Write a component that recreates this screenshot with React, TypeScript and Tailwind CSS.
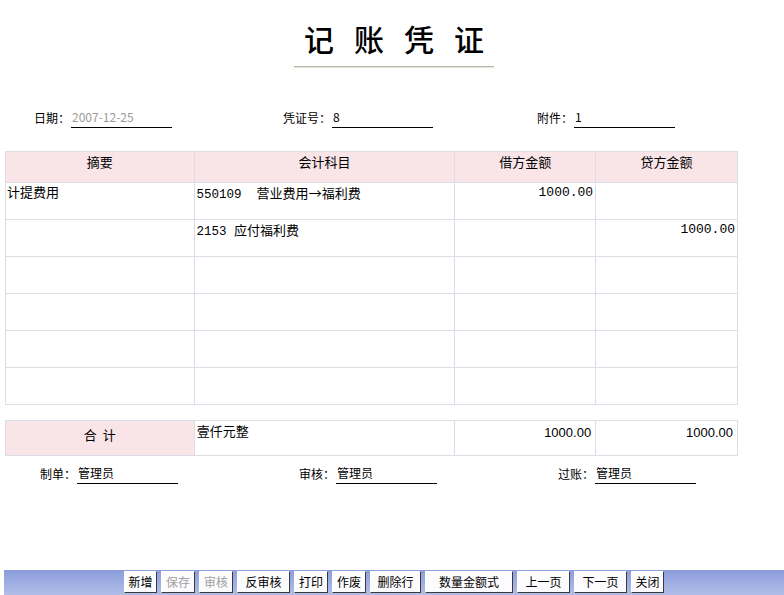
const cjk = 'font-["SimSun","Noto_Sans_CJK_SC",sans-serif]'

function Field({ label, value, muted }: { label: string; value: string; muted?: boolean }) {
  return (
    <div className="flex items-end">
      <span className="pb-[2px] text-[12px] leading-[16px] text-black">{label}</span>
      <span
        className={`ml-px w-[101px] border-b border-black pl-px pb-[1px] text-[12px] leading-[18px] ${
          muted ? 'text-[#9a9a9a]' : 'text-black'
        }`}
      >
        {value}
      </span>
    </div>
  )
}

const rows = [
  { memo: '计提费用', code: '550109  ', name: ['营业费用', '福利费'], debit: '1000.00', credit: '' },
  { memo: '', code: '2153 ', name: ['应付福利费'], debit: '', credit: '1000.00' },
  { memo: '', code: '', name: [], debit: '', credit: '' },
  { memo: '', code: '', name: [], debit: '', credit: '' },
  { memo: '', code: '', name: [], debit: '', credit: '' },
  { memo: '', code: '', name: [], debit: '', credit: '' },
]

const buttons = [
  { text: '新增', w: 'w-[33px]' },
  { text: '保存', w: 'w-[34px]', off: true },
  { text: '审核', w: 'w-[34px]', off: true },
  { text: '反审核', w: 'w-[53px]' },
  { text: '打印', w: 'w-[34px]' },
  { text: '作废', w: 'w-[34px]' },
  { text: '删除行', w: 'w-[51px]' },
  { text: '数量金额式', w: 'w-[88px]' },
  { text: '上一页', w: 'w-[53px]' },
  { text: '下一页', w: 'w-[53px]' },
  { text: '关闭', w: 'w-[33px]' },
]

const cell = 'border border-[#dcdde6] align-top'

function Cols() {
  return (
    <colgroup>
      <col className="w-[189px]" />
      <col className="w-[261px]" />
      <col className="w-[141px]" />
      <col className="w-[142px]" />
    </colgroup>
  )
}

export default function App() {
  return (
    <div className={`relative h-[595px] w-[784px] overflow-hidden bg-white ${cjk}`}>
      {/* title */}
      <div className="flex flex-col items-center pt-[20px] pl-[4px]">
        <h1 className="pl-[20px] text-[30px] font-medium leading-[36px] tracking-[20px] text-black">记账凭证</h1>
        <div className="mt-[10px] h-[2px] w-[200px] border-t border-[#b8b8a8] bg-[#e4e4dc]" />
      </div>

      {/* voucher info */}
      <div className="mt-[40px] flex pl-[34px]">
        <div className="w-[249px]">
          <Field label="日期：" value="2007-12-25" muted />
        </div>
        <div className="w-[254px]">
          <Field label="凭证号：" value="8" />
        </div>
        <Field label="附件：" value="1" />
      </div>

      {/* entries */}
      <table className="ml-[5px] mt-[23px] w-[733px] border-collapse text-[12px] text-black">
        <Cols />
        <thead>
          <tr className="h-[31px] bg-[#f9e4e8] text-[13px]">
            <th className={`${cell} align-middle font-normal`}>摘要</th>
            <th className={`${cell} align-middle font-normal`}>会计科目</th>
            <th className={`${cell} align-middle font-normal`}>借方金额</th>
            <th className={`${cell} align-middle font-normal`}>贷方金额</th>
          </tr>
        </thead>
        <tbody>
          {rows.map((r, i) => (
            <tr key={i} className="h-[37px]">
              <td className={`${cell} pl-px pt-[1px] text-[13px] leading-[16px]`}>{r.memo}</td>
              <td className={`${cell} pl-[2px] pt-[2px] text-[13px] leading-[16px] whitespace-pre`}>
                <span className='font-["Liberation_Mono",monospace] text-[12.5px]'>{r.code}</span>
                {r.name.map((n, j) => (
                  <span key={j}>
                    {j > 0 && <span className="inline-block w-[13px] text-center">→</span>}
                    {n}
                  </span>
                ))}
              </td>
              <td className={`${cell} pr-[2px] pt-[2px] text-right font-["Liberation_Mono",monospace] text-[13px] leading-[16px]`}>
                {r.debit}
              </td>
              <td className={`${cell} pr-[2px] pt-[2px] text-right font-["Liberation_Mono",monospace] text-[13px] leading-[16px]`}>
                {r.credit}
              </td>
            </tr>
          ))}
        </tbody>
      </table>

      {/* total */}
      <table className="ml-[5px] mt-[15px] w-[733px] border-collapse text-[12px] text-black">
        <Cols />
        <tbody>
          <tr className="h-[35px]">
            <td className={`${cell} bg-[#f9e4e8] pt-[4px] pl-[6px] text-center align-middle text-[13px] tracking-[6px]`}>合计</td>
            <td className={`${cell} pl-[2px] pt-[2px] text-[13px] leading-[16px]`}>壹仟元整</td>
            <td className={`${cell} pr-[4px] pt-[4px] text-right font-["Liberation_Sans",sans-serif] text-[13px] leading-[16px]`}>1000.00</td>
            <td className={`${cell} pr-[4px] pt-[4px] text-right font-["Liberation_Sans",sans-serif] text-[13px] leading-[16px]`}>1000.00</td>
          </tr>
        </tbody>
      </table>

      {/* signatures */}
      <div className="mt-[8px] flex pl-[40px]">
        <div className="w-[259px]">
          <Field label="制单：" value="管理员" />
        </div>
        <div className="w-[259px]">
          <Field label="审核：" value="管理员" />
        </div>
        <Field label="过账：" value="管理员" />
      </div>

      {/* toolbar */}
      <div className="absolute bottom-0 left-[4px] right-0 flex h-[25px] items-start gap-[4px] bg-gradient-to-b from-[#8b9cdb] to-[#b2bee9] pl-[120px] pt-[1px]">
        {buttons.map((b) => (
          <button
            key={b.text}
            className={`${b.w} h-[22px] border border-b-[#3a3a3a] border-l-white border-r-[#3a3a3a] border-t-white bg-[#fcfbfd] text-center text-[12px] leading-[18px] ${
              b.off ? 'text-[#a0a0a0]' : 'text-black'
            }`}
          >
            {b.text}
          </button>
        ))}
      </div>
    </div>
  )
}
